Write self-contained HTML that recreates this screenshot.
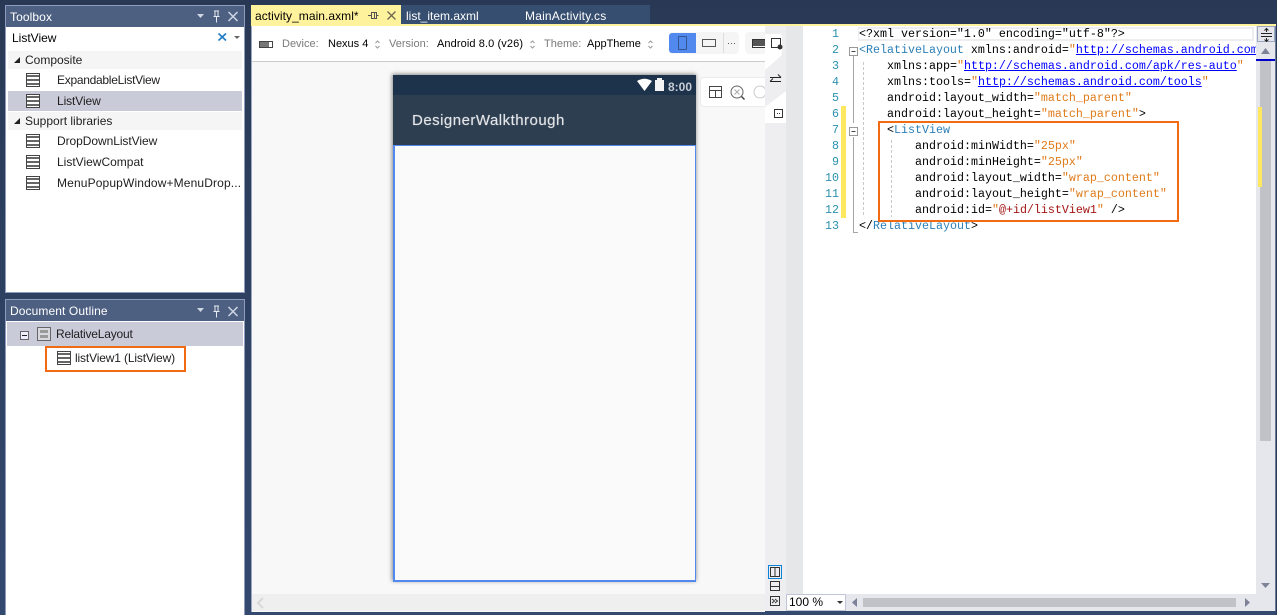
<!DOCTYPE html>
<html><head><meta charset="utf-8">
<style>
html,body{margin:0;padding:0;width:1277px;height:615px;overflow:hidden;background:linear-gradient(#293955,#33496e);}
body{position:relative;font-family:"Liberation Sans",sans-serif;font-size:12px;color:#1e1e1e;}
.a{position:absolute;}
.t{position:absolute;white-space:pre;line-height:16px;}
.li{position:absolute;left:26px;width:14px;height:14px;border:1px solid #444;box-sizing:border-box;background:repeating-linear-gradient(#fff 0 1px,#666 1px 3px,#fff 3px 4px);}
.ln{position:absolute;left:803px;width:36px;text-align:right;color:#2b91af;font-family:"Liberation Mono",monospace;font-size:11.67px;line-height:16px;}
.c{position:absolute;white-space:pre;font-family:"Liberation Mono",monospace;font-size:11.67px;line-height:16px;color:#000;}
.br{color:#2b7fb8}.o{color:#e07b1a}.u{color:#0000ff;text-decoration:underline}.r{color:#a31515}
</style></head><body>

<!-- Toolbox panel -->
<div class="a" style="left:5px;top:5px;width:240px;height:288px;background:#fff;border:1px solid #8e9bbc;box-sizing:border-box;"></div>
<div class="a" style="left:6px;top:6px;width:238px;height:21px;background:#4d6082;"></div>
<div class="t" style="left:10px;top:9px;color:#fff;letter-spacing:.1px;">Toolbox</div>
<svg class="a" style="left:195px;top:8px" width="48" height="18">
<path d="M2 6h7l-3.500 4z" fill="#cfd6e4"/>
<path d="M19 3h5M20 3v5M23 3v5M18.500 8.500h6M21.500 8.500v6" stroke="#e6eaf2" fill="none"/>
<path d="M33.500 4l9 9M42.500 4l-9 9" stroke="#cfd6e4" stroke-width="1.500" fill="none"/>
</svg>
<div class="a" style="left:7px;top:28px;width:236px;height:19px;background:#fff;"></div>
<div class="t" style="left:12px;top:30px;color:#000;">ListView</div>
<svg class="a" style="left:216px;top:30px" width="26" height="16">
<path d="M2.500 3.500l7.500 7M10 3.500l-7.500 7" stroke="#1e7bc4" stroke-width="1.600" fill="none"/>
<path d="M18 6h6l-3 3z" fill="#666"/>
</svg>
<div class="a" style="left:8px;top:51px;width:234px;height:18px;background:#f5f5f5;"></div>
<div class="a" style="left:8px;top:91px;width:234px;height:20px;background:#cacbd9;"></div>
<div class="a" style="left:8px;top:112px;width:234px;height:18px;background:#f5f5f5;"></div>
<svg class="a" style="left:14px;top:56px" width="8" height="8"><path d="M6 1v6H0z" fill="#222"/></svg>
<svg class="a" style="left:14px;top:117px" width="8" height="8"><path d="M6 1v6H0z" fill="#222"/></svg>
<div class="t" style="left:25px;top:52px;">Composite</div>
<div class="t" style="left:57px;top:72px;letter-spacing:-.28px;">ExpandableListView</div>
<div class="t" style="left:57px;top:93px;letter-spacing:-.1px;">ListView</div>
<div class="t" style="left:25px;top:113px;">Support libraries</div>
<div class="t" style="left:57px;top:133px;letter-spacing:-.06px;">DropDownListView</div>
<div class="t" style="left:57px;top:154px;">ListViewCompat</div>
<div class="t" style="left:57px;top:175px;letter-spacing:.14px;">MenuPopupWindow+MenuDrop...</div>
<div class="li" style="top:73px"></div>
<div class="li" style="top:94px"></div>
<div class="li" style="top:134px"></div>
<div class="li" style="top:155px"></div>
<div class="li" style="top:176px"></div>

<!-- Document Outline -->
<div class="a" style="left:5px;top:299px;width:240px;height:316px;background:#fff;border:1px solid #8e9bbc;border-bottom:0;box-sizing:border-box;"></div>
<div class="a" style="left:6px;top:300px;width:238px;height:21px;background:#4d6082;"></div>
<div class="t" style="left:10px;top:303px;color:#fff;letter-spacing:.1px;">Document Outline</div>
<svg class="a" style="left:195px;top:303px" width="48" height="18">
<path d="M2 5h7l-3.500 4z" fill="#cfd6e4"/>
<path d="M19 3h5M20 3v5M23 3v5M18.500 8.500h6M21.500 8.500v6" stroke="#e6eaf2" fill="none"/>
<path d="M33.500 4l9 9M42.500 4l-9 9" stroke="#cfd6e4" stroke-width="1.500" fill="none"/>
</svg>
<div class="a" style="left:7px;top:322px;width:236px;height:24px;background:#cacbd9;"></div>
<svg class="a" style="left:20px;top:331px" width="10" height="10"><rect x=".5" y=".5" width="8" height="8" fill="#eef" stroke="#666"/><path d="M2 4.500h5" stroke="#222"/></svg>
<div class="a" style="left:37px;top:327px;width:14px;height:14px;box-sizing:border-box;border:1px solid #666;background:linear-gradient(#999,#999) 2px 2px/8px 3px no-repeat,linear-gradient(#999,#999) 2px 7px/8px 3px no-repeat,#d8d8e0;"></div>
<div class="t" style="left:56px;top:326px;letter-spacing:-.2px;">RelativeLayout</div>
<div class="a" style="left:45px;top:346px;width:141px;height:26px;border:2px solid #f26a12;box-sizing:border-box;"></div>
<div class="li" style="left:57px;top:351px"></div>
<div class="t" style="left:75px;top:350px;letter-spacing:-.15px;">listView1 (ListView)</div>

<!-- Tabs -->
<div class="a" style="left:401px;top:5px;width:249px;height:19px;background:#364e6f;"></div>
<div class="a" style="left:251px;top:5px;width:150px;height:21px;background:#fff29d;"></div>
<div class="a" style="left:251px;top:24px;width:1026px;height:2px;background:#fff29d;"></div>
<div class="t" style="left:255px;top:8px;color:#000;letter-spacing:.05px;">activity_main.axml*</div>
<svg class="a" style="left:366px;top:9px" width="32" height="14">
<path d="M2 6.500h3M5.500 3.500h5v6h-5zM8.500 3.500v6M10.500 6.500h2" stroke="#555" fill="none"/>
<path d="M21.500 2.500l8 8M29.500 2.500l-8 8" stroke="#6b6650" stroke-width="1.300" fill="none"/>
</svg>
<div class="t" style="left:406px;top:8px;color:#fff;">list_item.axml</div>
<div class="t" style="left:525px;top:8px;color:#fff;letter-spacing:.2px;">MainActivity.cs</div>

<!-- Designer area -->
<div class="a" style="left:251px;top:26px;width:514px;height:586px;background:#f8f8f8;border-left:1px solid #9aa6c2;box-sizing:border-box;"></div>
<div class="a" style="left:252px;top:26px;width:513px;height:35px;background:#fff;border-bottom:1px solid #ccc;box-sizing:content-box;"></div>
<div class="a" style="left:252px;top:594px;width:513px;height:17px;background:#efefef;"></div>
<svg class="a" style="left:255px;top:596px" width="12" height="14"><path d="M8 2L3 7l5 5" stroke="#d8d8d8" stroke-width="2" fill="none"/></svg>

<div class="a" style="left:259px;top:41px;width:12px;height:5px;border:1px solid #444;background:linear-gradient(90deg,#777 0 9px,#fff 9px);box-sizing:content-box;"></div>
<div class="t" style="left:282px;top:36px;color:#7b7b7b;font-size:11px;">Device:</div>
<div class="t" style="left:328px;top:36px;color:#000;font-size:11px;">Nexus 4</div>
<div class="t" style="left:389px;top:36px;color:#7b7b7b;font-size:11px;">Version:</div>
<div class="t" style="left:437px;top:36px;color:#000;font-size:11px;letter-spacing:.1px;">Android 8.0 (v26)</div>
<div class="t" style="left:544px;top:36px;color:#7b7b7b;font-size:11px;">Theme:</div>
<div class="t" style="left:587px;top:36px;color:#000;font-size:11px;">AppTheme</div>
<svg class="a" style="left:375px;top:40px" width="6" height="9"><path d="M.5 3l2-2 2 2M.5 6l2 2 2-2" stroke="#999" fill="none"/></svg>
<svg class="a" style="left:530px;top:40px" width="6" height="9"><path d="M.5 3l2-2 2 2M.5 6l2 2 2-2" stroke="#999" fill="none"/></svg>
<svg class="a" style="left:648px;top:40px" width="6" height="9"><path d="M.5 3l2-2 2 2M.5 6l2 2 2-2" stroke="#999" fill="none"/></svg>

<div class="a" style="left:669px;top:32px;width:70px;height:22px;background:#f5f5f5;border-radius:4px;"></div>
<div class="a" style="left:669px;top:33px;width:27px;height:20px;background:#5189ee;border-radius:3px 0 0 3px;"></div>
<div class="a" style="left:678px;top:36px;width:9px;height:14px;border:1px solid #34558f;box-sizing:border-box;border-radius:1px;"></div>
<div class="a" style="left:702px;top:39px;width:14px;height:8px;border:1px solid #555;box-sizing:border-box;"></div>
<div class="a" style="left:723px;top:33px;width:1px;height:20px;background:#ddd;"></div>
<div class="t" style="left:727px;top:38px;font-size:9px;color:#444;line-height:10px;">···</div>
<div class="a" style="left:745px;top:32px;width:20px;height:22px;background:#f5f5f5;border-radius:4px 0 0 4px;"></div>
<div class="a" style="left:752px;top:39px;width:13px;height:9px;background:linear-gradient(#555 0 6px,#fff 6px);border:1px solid #333;border-right:0;box-sizing:border-box;"></div>

<!-- Device -->
<div class="a" style="left:393px;top:75px;width:302px;height:505px;background:#fafafa;box-shadow:0 0 4px 1px rgba(0,0,0,.45);"></div>
<div class="a" style="left:393px;top:75px;width:303px;height:20px;background:#1d324b;"></div>
<div class="a" style="left:393px;top:95px;width:303px;height:50px;background:#2d3e50;"></div>
<div class="a" style="left:393px;top:145px;width:303px;height:437px;box-sizing:border-box;border:solid #5189ee;border-width:1px 1px 2px 2px;background:#fafafa;"></div>
<svg class="a" style="left:636px;top:78px" width="30" height="14"><path d="M1 3Q8.500-1.500 16 3L8.500 13z" fill="#fff"/><rect x="19" y="2" width="9" height="11" fill="#f4f4f4"/><rect x="21" y="0" width="5" height="3" fill="#f4f4f4"/></svg>
<div class="t" style="left:668px;top:79px;color:#c6ccd4;font-weight:bold;font-size:12px;">8:00</div>
<div class="t" style="left:412px;top:112px;color:#e4e6e9;font-size:15px;line-height:18px;letter-spacing:.48px;text-shadow:0 0 1px rgba(228,230,233,.6);">DesignerWalkthrough</div>

<!-- Zoom toolbar -->
<div class="a" style="left:700px;top:77px;width:65px;height:30px;background:#fff;border:1px solid #ececec;border-right:0;border-radius:4px 0 0 4px;box-sizing:border-box;"></div>
<svg class="a" style="left:707px;top:84px" width="58" height="18">
<path d="M2.500 2.500h12v11h-12zM2.500 6.500h12M8.500 7v6" stroke="#444" fill="none"/>
<circle cx="30" cy="8" r="6" stroke="#666" fill="none"/><path d="M27.500 5.500l5 5M32.500 5.500l-5 5" stroke="#aaa"/><path d="M34.500 12.500l3 3" stroke="#444" stroke-width="1.500"/>
<circle cx="53" cy="8" r="6" stroke="#ccc" fill="none"/>
</svg>

<!-- Side strip -->
<div class="a" style="left:765px;top:26px;width:21px;height:585px;background:#eeeef0;"></div>
<div class="a" style="left:786px;top:26px;width:17px;height:568px;background:#e6e7e9;"></div>
<svg class="a" style="left:765px;top:26px" width="21" height="100">
<path d="M0 8h14q3 0 3 3v18L0 44z" fill="#fff"/>
<rect x="6.500" y="12.500" width="9" height="9" fill="none" stroke="#333"/><circle cx="15" cy="21" r="2.500" fill="#333"/>
<path d="M5 51.500h11M13 48.500l3 3M16 55.500H5M8 52.500l-3 3" stroke="#222" fill="none"/>
<path d="M21 65v32H0V81z" fill="#fff"/>
<rect x="9.500" y="83.500" width="8" height="8" fill="none" stroke="#333"/><path d="M12 87.500h3" stroke="#333" stroke-dasharray="1 1"/>
</svg>
<div class="a" style="left:768px;top:565px;width:14px;height:14px;border:1px solid #0a84d8;box-sizing:border-box;"></div>
<svg class="a" style="left:769px;top:566px" width="14" height="45">
<rect x="1.500" y="1.500" width="9" height="9" fill="none" stroke="#333"/><path d="M6 2v8" stroke="#333"/>
<rect x="1.500" y="15.500" width="9" height="9" fill="none" stroke="#333"/><path d="M2 20.500h8" stroke="#333"/>
<rect x="1.500" y="30.500" width="9" height="9" fill="none" stroke="#333"/><path d="M3 33l2.500 2-2.500 2M6 33l2.500 2-2.500 2" stroke="#333" fill="none"/>
</svg>

<!-- Editor -->
<div class="a" style="left:803px;top:26px;width:453px;height:568px;background:#fff;"></div>
<div class="a" style="left:786px;top:594px;width:489px;height:17px;background:#e6e7ed;"></div>
<div class="a" style="left:1256px;top:26px;width:19px;height:568px;background:#e6e7ed;"></div>
<div class="a" style="left:1275px;top:26px;width:1px;height:585px;background:#6c7d9c;"></div>
<div class="a" style="left:1276px;top:0;width:1px;height:615px;background:#293955;"></div>

<div class="a" style="left:858px;top:27px;width:396px;height:14px;border:2px solid #eeeef2;border-left:1px solid #eeeef2;box-sizing:border-box;"></div>
<div class="ln" style="top:26px">1</div><div class="ln" style="top:42px">2</div><div class="ln" style="top:58px">3</div><div class="ln" style="top:74px">4</div><div class="ln" style="top:90px">5</div><div class="ln" style="top:106px">6</div><div class="ln" style="top:122px">7</div><div class="ln" style="top:138px">8</div><div class="ln" style="top:154px">9</div><div class="ln" style="top:170px">10</div><div class="ln" style="top:186px">11</div><div class="ln" style="top:202px">12</div><div class="ln" style="top:218px">13</div>

<div class="a" style="left:841px;top:106px;width:5px;height:112px;background:#fee85f;"></div>
<svg class="a" style="left:849px;top:42px" width="50" height="194">
<path d="M4.500 13V81M4.500 95V190.500H9" stroke="#a5a5a5" fill="none"/>
<rect x=".5" y="5.500" width="8" height="8" fill="#fff" stroke="#999"/><path d="M2.500 9.500h4" stroke="#444"/>
<rect x=".5" y="85.500" width="8" height="8" fill="#fff" stroke="#999"/><path d="M2.500 89.500h4" stroke="#444"/>
<path d="M14.500 20V175M42.500 98V175" stroke="#c8c8c8" stroke-dasharray="3 2" fill="none"/>
</svg>

<div class="c" style="left:859px;top:26px">&lt;?xml version="1.0" encoding="utf-8"?&gt;</div>
<div class="c" style="left:859px;top:42px;width:397px;overflow:hidden"><span class="br">&lt;RelativeLayout</span> xmlns:android=<span class="o">"</span><span class="u">http://schemas.android.com/apk/res/android</span></div>
<div class="c" style="left:887px;top:58px">xmlns:app=<span class="o">"</span><span class="u">http://schemas.android.com/apk/res-auto</span><span class="o">"</span></div>
<div class="c" style="left:887px;top:74px">xmlns:tools=<span class="o">"</span><span class="u">http://schemas.android.com/tools</span><span class="o">"</span></div>
<div class="c" style="left:887px;top:90px">android:layout_width=<span class="o">"match_parent"</span></div>
<div class="c" style="left:887px;top:106px">android:layout_height=<span class="o">"match_parent"</span>&gt;</div>
<div class="c" style="left:887px;top:122px">&lt;<span class="br">ListView</span></div>
<div class="c" style="left:915px;top:138px">android:minWidth=<span class="o">"25px"</span></div>
<div class="c" style="left:915px;top:154px">android:minHeight=<span class="o">"25px"</span></div>
<div class="c" style="left:915px;top:170px">android:layout_width=<span class="o">"wrap_content"</span></div>
<div class="c" style="left:915px;top:186px">android:layout_height=<span class="o">"wrap_content"</span></div>
<div class="c" style="left:915px;top:202px">android:id=<span class="o">"</span><span class="r">@+id/listView1</span><span class="o">"</span> /&gt;</div>
<div class="c" style="left:859px;top:218px">&lt;/<span class="br">RelativeLayout</span>&gt;</div>
<div class="a" style="left:878px;top:121px;width:301px;height:101px;border:2px solid #f26a12;box-sizing:border-box;"></div>

<!-- Vertical scrollbar -->
<div class="a" style="left:1257px;top:26px;width:18px;height:16px;background:#e6e7ed;border:1px solid #9aa6c2;box-sizing:border-box;"></div>
<svg class="a" style="left:1257px;top:27px" width="18" height="15"><path d="M4 6.500h11M4 9.500h11M9.500 2v3M9.500 11v3M7.500 3.500l2-2 2 2M7.500 12.500l2 2 2-2" stroke="#222" fill="none"/></svg>
<svg class="a" style="left:1259px;top:46px" width="14" height="10"><path d="M2 8h9L6.500 2z" fill="#7d8298"/></svg>
<div class="a" style="left:1256px;top:59px;width:19px;height:2px;background:#0000c8;"></div>
<div class="a" style="left:1260px;top:61px;width:11px;height:380px;background:#c1c2c7;"></div>
<div class="a" style="left:1258px;top:107px;width:4px;height:80px;background:#fee85f;"></div>
<svg class="a" style="left:1259px;top:580px" width="14" height="10"><path d="M2 3h9L6.500 8z" fill="#7d8298"/></svg>

<!-- Zoom combo + hscroll -->
<div class="a" style="left:786px;top:594px;width:60px;height:17px;background:#fff;border:1px solid #c0c6d8;box-sizing:border-box;"></div>
<div class="t" style="left:789px;top:594px;color:#000;font-size:12px;">100 %</div>
<svg class="a" style="left:836px;top:599px" width="10" height="8"><path d="M1 2h6L4 5z" fill="#333"/></svg>
<svg class="a" style="left:851px;top:597px" width="8" height="12"><path d="M6 1v9L1 5.500z" fill="#7d8298"/></svg>
<div class="a" style="left:863px;top:598px;width:373px;height:9px;background:#c1c2c7;"></div>
<svg class="a" style="left:1243px;top:597px" width="8" height="12"><path d="M2 1v9l5-4.500z" fill="#7d8298"/></svg>

</body></html>
